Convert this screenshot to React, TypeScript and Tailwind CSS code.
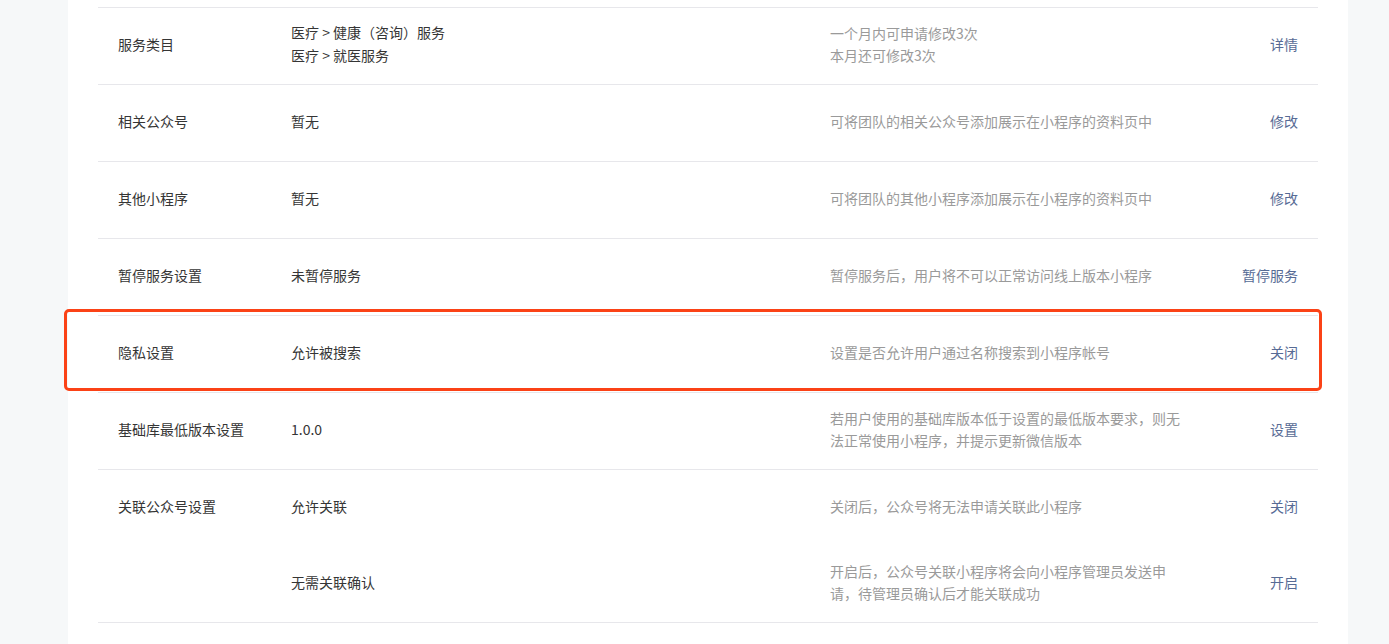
import React from 'react';

type Row = {
  label?: string;
  value: string[];
  desc: string[];
  action: string;
  highlight?: boolean;
};

const rows: Row[] = [
  { label: '服务类目', value: ['医疗 > 健康（咨询）服务', '医疗 > 就医服务'], desc: ['一个月内可申请修改3次', '本月还可修改3次'], action: '详情' },
  { label: '相关公众号', value: ['暂无'], desc: ['可将团队的相关公众号添加展示在小程序的资料页中'], action: '修改' },
  { label: '其他小程序', value: ['暂无'], desc: ['可将团队的其他小程序添加展示在小程序的资料页中'], action: '修改' },
  { label: '暂停服务设置', value: ['未暂停服务'], desc: ['暂停服务后，用户将不可以正常访问线上版本小程序'], action: '暂停服务' },
  { label: '隐私设置', value: ['允许被搜索'], desc: ['设置是否允许用户通过名称搜索到小程序帐号'], action: '关闭', highlight: true },
  { label: '基础库最低版本设置', value: ['1.0.0'], desc: ['若用户使用的基础库版本低于设置的最低版本要求，则无法正常使用小程序，并提示更新微信版本'], action: '设置' },
];

const group: Row[] = [
  { label: '关联公众号设置', value: ['允许关联'], desc: ['关闭后，公众号将无法申请关联此小程序'], action: '关闭' },
  { value: ['无需关联确认'], desc: ['开启后，公众号关联小程序将会向小程序管理员发送申请，待管理员确认后才能关联成功'], action: '开启' },
];

function Cells({ row }: { row: Row }) {
  return (
    <>
      <div className="w-[173px] shrink-0 text-[#353535]">{row.label}</div>
      <div className="w-[539px] shrink-0 text-[#353535] leading-[23px]">
        {row.value.map(v => <div key={v}>{v}</div>)}
      </div>
      <div className="w-[352px] shrink-0 text-[#9a9a9a] leading-[22px]">
        {row.desc.map(d => <div key={d}>{d}</div>)}
      </div>
      <div className="flex-1 text-right text-[#576b95]">{row.action}</div>
    </>
  );
}

export default function App() {
  return (
    <div
      className="h-[644px] overflow-hidden bg-[#f6f8f9] flex text-[14px]"
      style={{ fontFamily: '"Helvetica Neue", "Noto Sans CJK SC", sans-serif' }}
    >
      <div className="ml-[68px] w-[1280px] bg-white px-[30px] min-h-[644px]">
        <div className="h-[8px] border-b border-[#e7e7eb]" />
        {rows.map(row => (
          <div key={row.label} className="relative h-[77px] border-b border-[#e7e7eb] flex items-center px-[20px] pb-[4px]">
            <Cells row={row} />
            {row.highlight && (
              <div className="absolute -left-[34px] -right-[4px] -top-[7px] bottom-[1px] border-[3px] border-[#fb4216] rounded-[5px] pointer-events-none" />
            )}
          </div>
        ))}
        <div className="border-b border-[#e7e7eb]">
          {group.map((row, i) => (
            <div key={i} className="h-[76px] flex items-center px-[20px] pb-[4px]">
              <Cells row={row} />
            </div>
          ))}
        </div>
      </div>
    </div>
  );
}
